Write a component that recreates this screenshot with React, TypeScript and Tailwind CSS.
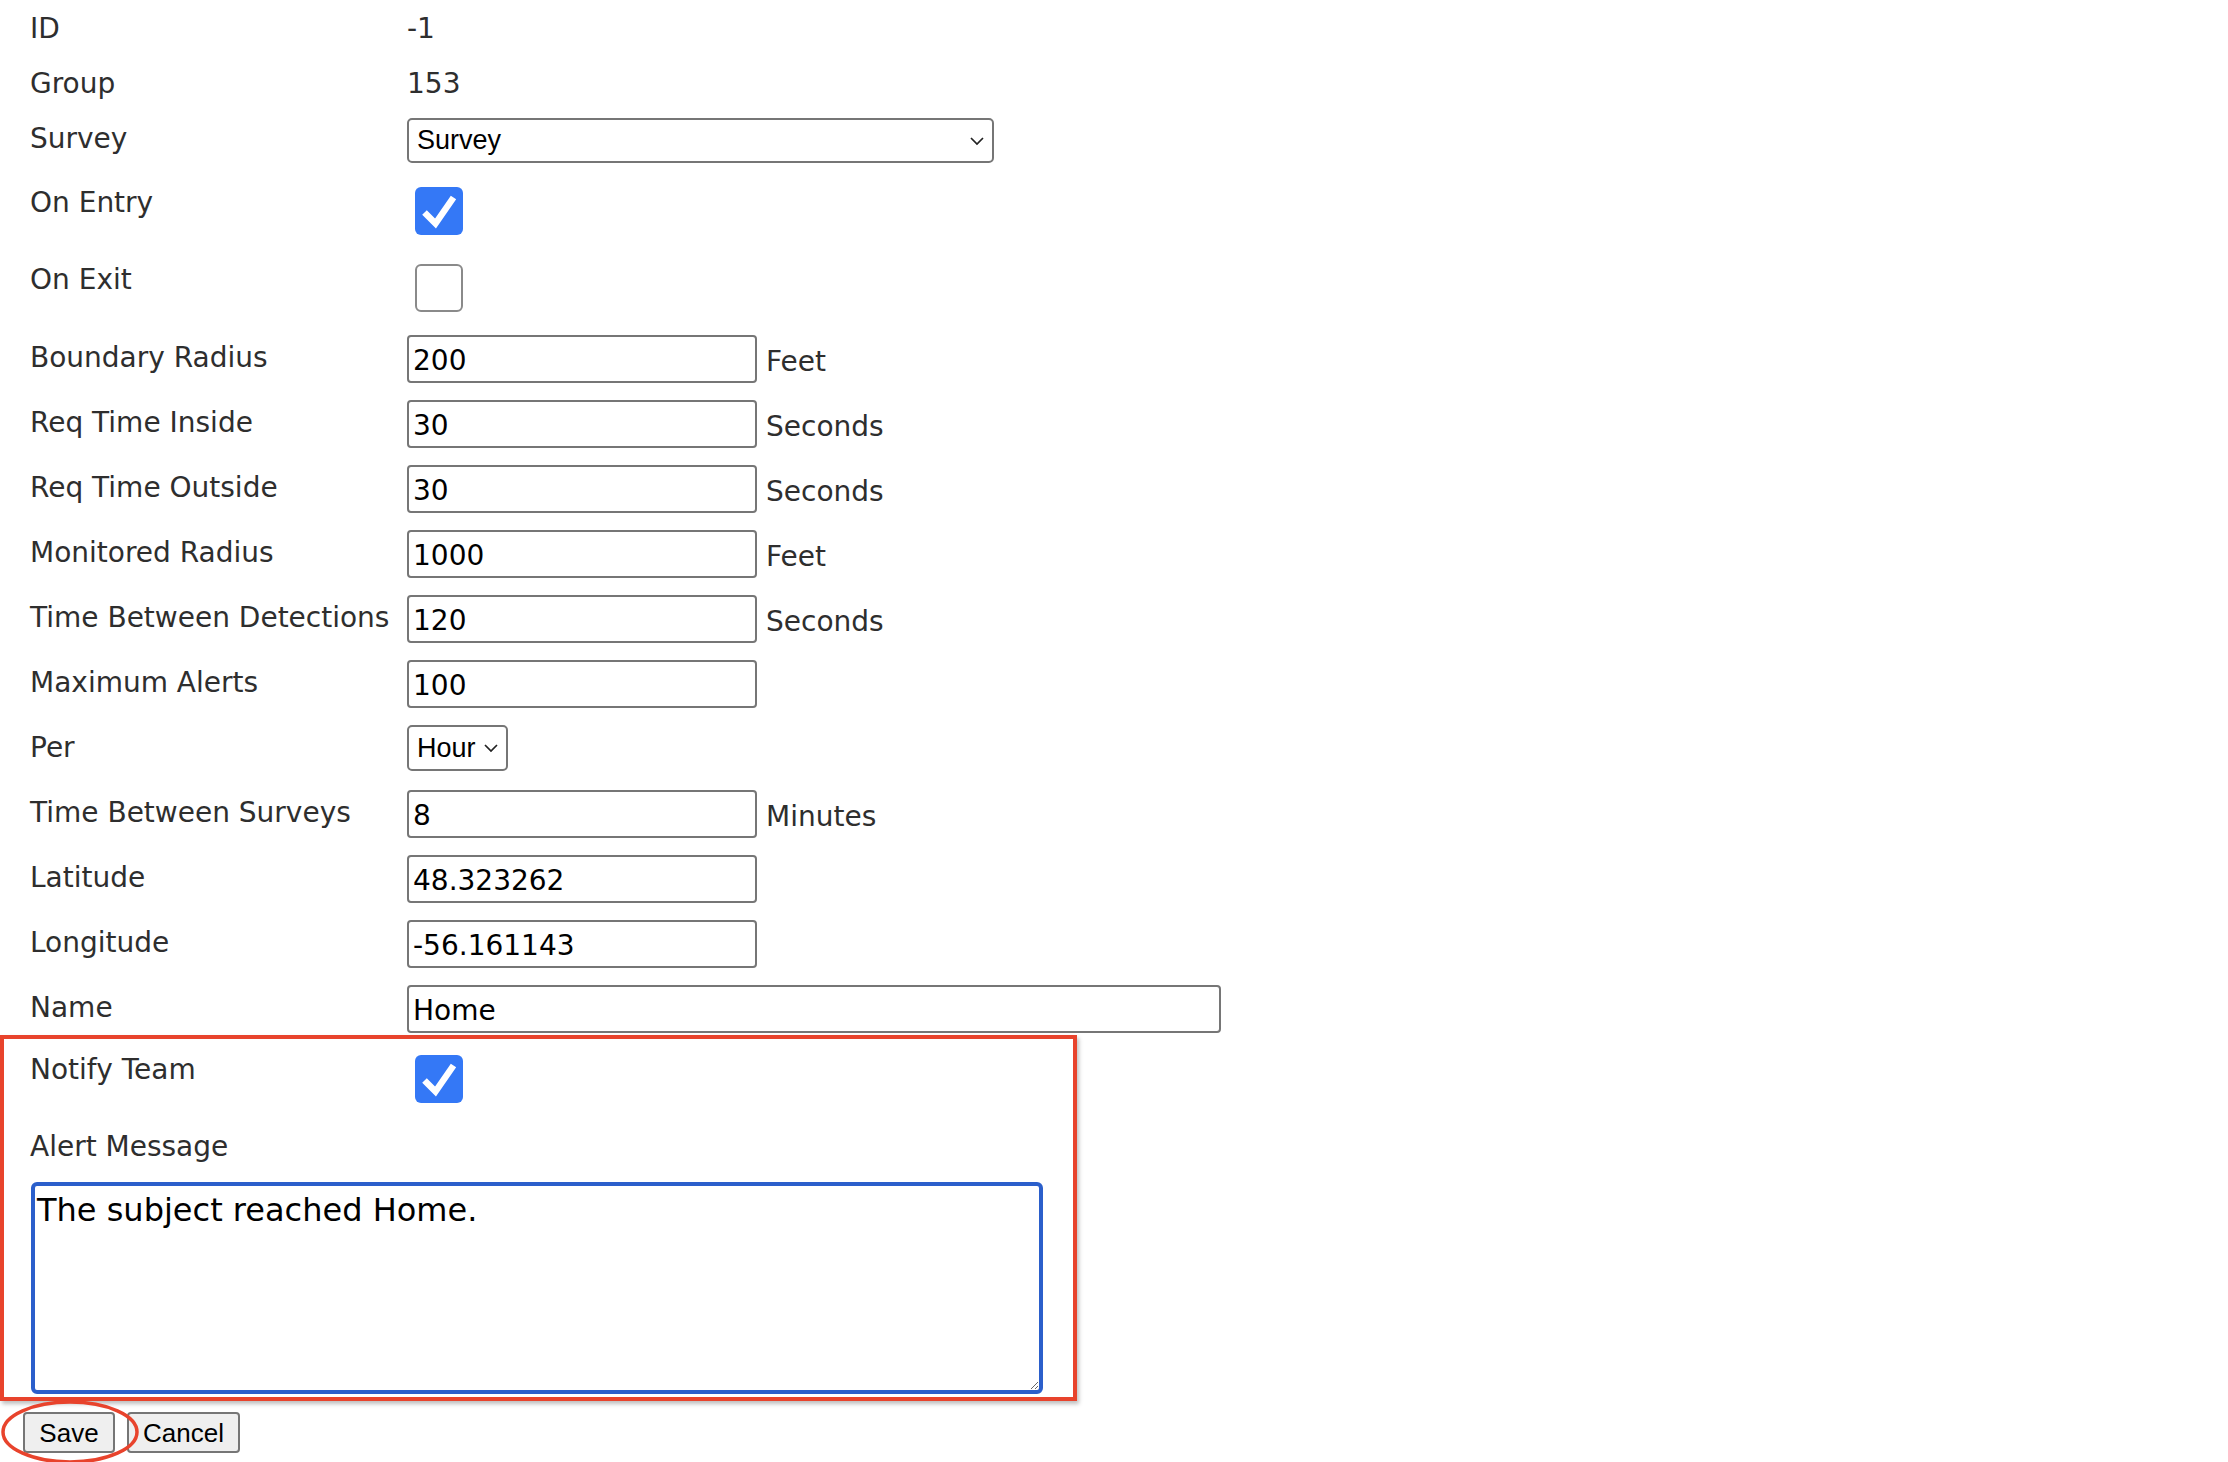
import React from 'react';

type FieldRow = {
  label: string;
  value: string;
  unit?: string;
  wide?: boolean;
  select?: boolean;
};

const fields: FieldRow[] = [
  { label: 'Boundary Radius', value: '200', unit: 'Feet' },
  { label: 'Req Time Inside', value: '30', unit: 'Seconds' },
  { label: 'Req Time Outside', value: '30', unit: 'Seconds' },
  { label: 'Monitored Radius', value: '1000', unit: 'Feet' },
  { label: 'Time Between Detections', value: '120', unit: 'Seconds' },
  { label: 'Maximum Alerts', value: '100' },
  { label: 'Per', value: 'Hour', select: true },
  { label: 'Time Between Surveys', value: '8', unit: 'Minutes' },
  { label: 'Latitude', value: '48.323262' },
  { label: 'Longitude', value: '-56.161143' },
  { label: 'Name', value: 'Home', wide: true },
];

function Label({ children, className = '' }: { children: React.ReactNode; className?: string }) {
  return (
    <div className={`w-[377px] shrink-0 text-[28px] leading-[33px] text-[#2e2e2e] ${className}`}>
      {children}
    </div>
  );
}

function Chevron() {
  return (
    <svg
      className="pointer-events-none absolute right-[10px] top-1/2 -translate-y-1/2"
      width="14"
      height="9"
      viewBox="0 0 14 9"
      fill="none"
    >
      <path d="M1 1.5l6 6 6-6" stroke="#222" strokeWidth="1.7" />
    </svg>
  );
}

function Checkbox({ checked }: { checked: boolean }) {
  if (!checked) {
    return <div className="ml-[8px] mt-[3px] h-[48px] w-[48px] rounded-[6px] border-2 border-[#8a8a8a] bg-white" />;
  }
  return (
    <div className="ml-[8px] mt-[3px] h-[48px] w-[48px] rounded-[6px] bg-[#3478f6]">
      <svg width="48" height="48" viewBox="0 0 48 48" fill="none">
        <path d="M9.5 25.5L20.5 36.5L38.5 10.5" stroke="white" strokeWidth="6.5" />
      </svg>
    </div>
  );
}

export default function App() {
  return (
    <div className="relative h-[1462px] w-full overflow-hidden bg-white font-['DejaVu_Sans',Verdana,sans-serif]">
      <div className="pl-[30px]">
        {/* read-only info */}
        <div className="flex h-[55px] items-start">
          <Label className="mt-[12px]">ID</Label>
          <div className="mt-[12px] text-[28px] leading-[33px] text-[#2e2e2e]">-1</div>
        </div>
        <div className="flex h-[55px] items-start">
          <Label className="mt-[12px]">Group</Label>
          <div className="mt-[12px] text-[28px] leading-[33px] text-[#2e2e2e]">153</div>
        </div>

        <div className="flex h-[74px] items-start">
          <Label className="mt-[12px]">Survey</Label>
          <div className="relative mt-[8px] h-[45px] w-[587px]">
            <select
              defaultValue="Survey"
              className="h-full w-full appearance-none rounded-[5px] border-2 border-[#767676] bg-white pl-[8px] font-['Liberation_Sans',Arial,sans-serif] text-[27px] text-black outline-none"
            >
              <option>Survey</option>
            </select>
            <Chevron />
          </div>
        </div>

        <div className="flex h-[77px] items-start">
          <Label className="mt-[2px]">On Entry</Label>
          <Checkbox checked />
        </div>
        <div className="flex h-[74px] items-start">
          <Label className="mt-[2px]">On Exit</Label>
          <Checkbox checked={false} />
        </div>

        {fields.map((f) => (
          <div key={f.label} className="flex h-[65px] items-start">
            <Label className="mt-[6px]">{f.label}</Label>
            {f.select ? (
              <div className="relative h-[46px] w-[101px]">
                <select
                  defaultValue={f.value}
                  className="h-full w-full appearance-none rounded-[5px] border-2 border-[#767676] bg-white pl-[8px] font-['Liberation_Sans',Arial,sans-serif] text-[27px] text-black outline-none"
                >
                  <option>Hour</option>
                  <option>Day</option>
                </select>
                <Chevron />
              </div>
            ) : (
              <input
                defaultValue={f.value}
                className={`h-[48px] rounded-[4px] border-2 border-[#767676] bg-white px-[4px] pt-[2px] text-[28px] leading-[33px] text-black outline-none ${f.wide ? 'w-[814px]' : 'w-[350px]'}`}
              />
            )}
            {f.unit && <span className="ml-[9px] pt-[3px] text-[28px] leading-[48px] text-[#2e2e2e]">{f.unit}</span>}
          </div>
        ))}

        <div className="flex h-[79px] items-start">
          <Label className="mt-[3px]">Notify Team</Label>
          <div className="mt-[2px]">
            <Checkbox checked />
          </div>
        </div>

        <div className="h-[52px]">
          <Label className="mt-[1px]">Alert Message</Label>
        </div>
      </div>

      <div className="pl-[31px]">
        <textarea
          defaultValue="The subject reached Home."
          className="block h-[212px] w-[1012px] rounded-[6px] border-4 border-[#2b5fcb] bg-white px-[2px] pt-[6px] text-[32px] leading-[37px] text-black outline-none"
        />
      </div>

      <div className="mt-[18px] flex gap-[12px] pl-[23px]">
        <button className="h-[41px] w-[92px] rounded-[4px] border-2 border-[#767676] bg-[#efefef] font-['Liberation_Sans',Arial,sans-serif] text-[26px] text-black">
          Save
        </button>
        <button className="h-[41px] w-[113px] rounded-[4px] border-2 border-[#767676] bg-[#efefef] font-['Liberation_Sans',Arial,sans-serif] text-[26px] text-black">
          Cancel
        </button>
      </div>

      {/* annotations drawn over the form */}
      <div className="pointer-events-none absolute left-0 top-[1035px] h-[366px] w-[1077px] border-4 border-[#e8432c] shadow-[2px_3px_4px_rgba(0,0,0,0.25)]" />
      <svg className="pointer-events-none absolute left-0 top-[1400px]" width="142" height="66" viewBox="0 0 142 66" fill="none">
        <ellipse cx="70" cy="32" rx="67" ry="30" stroke="#e8432c" strokeWidth="3.5" />
      </svg>
    </div>
  );
}
